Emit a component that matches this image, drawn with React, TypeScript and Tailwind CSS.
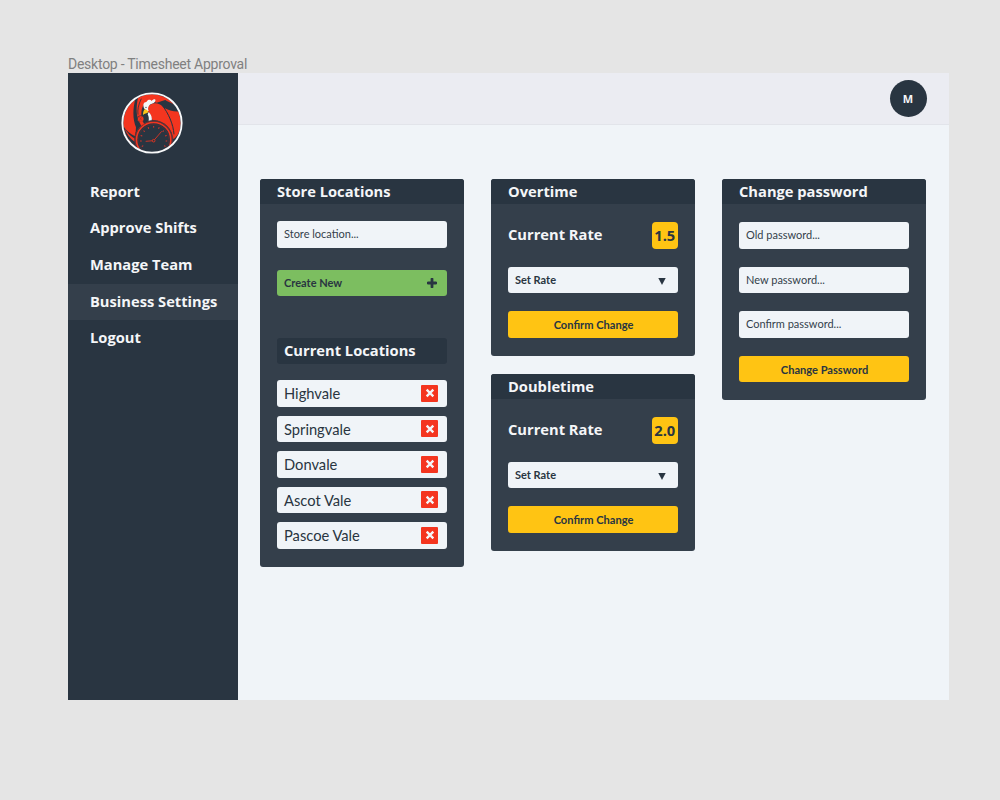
import type { ReactNode } from "react";

const navItems = ["Report", "Approve Shifts", "Manage Team", "Business Settings", "Logout"];
const locations = ["Highvale", "Springvale", "Donvale", "Ascot Vale", "Pascoe Vale"];
const ticks = [-120, -96, -72, -48, -24, 0, 24, 48, 72, 96, 120];

function Logo() {
  return (
    <svg className="h-[62px] w-[62px]" viewBox="27 24 186 186" aria-hidden="true">
      <defs>
        <clipPath id="disc">
          <circle cx="120" cy="117" r="86" />
        </clipPath>
      </defs>
      <circle cx="120" cy="117" r="88" fill="#293541" />
      <g clipPath="url(#disc)">
        <path d="M30 125C34 90 44 67 70 44C61 80 63 108 72 130L68 190C50 174 36 150 30 125Z" fill="#f4351f" />
        <path d="M34 126C42 140 54 150 72 158L68 190C52 174 38 152 34 126Z" fill="#293541" />
        <path d="M38 134C46 147 58 158 70 165L68 173C55 164 44 151 38 134Z" fill="#f4351f" />
        <path d="M78 41C96 30 120 26 147 36L166 46L134 56C120 50 107 55 97 60C88 72 88 84 88 97L78 104C72 88 73 64 78 41Z" fill="#f4351f" />
        <path d="M88 44C79 62 76 78 78 92" fill="none" stroke="#293541" strokeWidth="2.5" />
        <path d="M144 34C170 38 186 52 197 66L163 50Z" fill="#f4351f" />
        <path d="M152 70C170 80 190 84 203 82L207 120C206 140 198 155 184 166C184 127 171 96 152 70Z" fill="#f4351f" />
        <path d="M104 72C117 53 140 54 153 68C171 91 183 127 186 158L179 171C177 135 150 109 122 109L112 91Z" fill="#f4351f" />
        <path d="M149 62C170 88 184 121 186 151" fill="none" stroke="#293541" strokeWidth="3" />
        <path d="M97 74C92 64 94 54 103 54C108 45 117 47 118 51C126 43 132 45 130 51C126 60 116 58 111 65C108 69 107 76 110 80L106 83Z" fill="#f4f6f8" />
        <path d="M106 82C112 84 120 96 118 110L111 111C112 101 107 98 101 92Z" fill="#293541" />
        <path d="M110 84C118 92 121 102 119 110L110 111C111 103 110 97 107 91Z" fill="#f4f6f8" />
        <path d="M98 76C103 76 108 80 109 85C104 88 98 89 93 93C93 85 95 80 98 76Z" fill="#fcc419" />
        <circle cx="102" cy="70" r="2" fill="#293541" />
        <circle cx="86" cy="105" r="10" fill="#f4351f" stroke="#293541" strokeWidth="2" />
        <path d="M82 100l8 9M89 99l-7 11" stroke="#9d2925" strokeWidth="1.5" />
        <circle cx="125" cy="167" r="58" fill="#293541" />
        <path d="M82 114l9-3 6 9-9 6Z" fill="#f4351f" />
        <circle cx="125" cy="167" r="56" fill="none" stroke="#b32d26" strokeWidth="1.5" />
        <circle cx="125" cy="167" r="51.5" fill="none" stroke="#f4351f" strokeWidth="5" />
        <circle cx="125" cy="167" r="46" fill="none" stroke="#8a2b2a" strokeWidth="1" />
        {ticks.map((a) => (
          <path key={a} d="M125 126v5" transform={`rotate(${a} 125 167)`} stroke="#d9342a" strokeWidth="3" />
        ))}
        <path d="M101 172L125 170L149 142" fill="none" stroke="#f4351f" strokeWidth="2.4" />
        <circle cx="125" cy="170" r="4" fill="#293541" stroke="#f4351f" strokeWidth="2.5" />
      </g>
      <circle cx="120" cy="117" r="89" fill="none" stroke="#f8f9fa" strokeWidth="5.5" />
    </svg>
  );
}

function Card({ title, className, children }: { title: string; className: string; children: ReactNode }) {
  return (
    <section className={`w-[204px] overflow-hidden rounded-[3px] bg-[#343f4b] ${className}`}>
      <h2 className="h-[24.5px] bg-[#293541] pl-[17px] text-[14.7px] leading-[24.5px] font-bold text-[#f4f6f8]">{title}</h2>
      <div className="px-[17px]">{children}</div>
    </section>
  );
}

function Field({ placeholder, className }: { placeholder: string; className: string }) {
  return (
    <div className={`h-[26.5px] rounded-[3px] bg-[#f0f4f8] pl-[7px] font-[Lato,sans-serif] text-[11px] leading-[26px] text-[#343f4b] ${className}`}>
      {placeholder}
    </div>
  );
}

function YellowButton({ label, className }: { label: string; className: string }) {
  return (
    <button className={`block h-[26.5px] w-full rounded-[3px] bg-[#ffc413] pl-[1px] text-center font-[Lato,sans-serif] text-[11.1px] leading-[27px] font-bold text-[#293541] ${className}`}>
      {label}
    </button>
  );
}

function RateCard({ title, rate }: { title: string; rate: string }) {
  return (
    <Card title={title} className="h-[176.5px]">
      <div className="mt-[18.5px] flex h-[26.5px] items-start justify-between">
        <span className="text-[14.7px] leading-[25.5px] font-bold text-[#f4f6f8]">Current Rate</span>
        <span className="h-[26.5px] w-[26.5px] rounded-[4px] bg-[#ffc413] text-center text-[14.7px] leading-[27px] font-bold text-[#293541]">{rate}</span>
      </div>
      <div className="mt-[18px] flex h-[26.5px] items-center justify-between rounded-[3px] bg-[#f0f4f8] pr-[12px] pl-[7px]">
        <span className="font-[Lato,sans-serif] text-[11px] leading-[27px] font-bold text-[#293541]">Set Rate</span>
        <svg className="mt-[4px] h-[7px] w-[8px]" viewBox="0 0 8 7" aria-hidden="true">
          <path d="M0.3 0h7.4L4 7Z" fill="#293541" />
        </svg>
      </div>
      <YellowButton label="Confirm Change" className="mt-[18px]" />
    </Card>
  );
}

export default function App() {
  return (
    <div className="h-[800px] w-[1000px] overflow-hidden bg-[#e5e5e5] pt-[55px] pl-[68px] font-['Open_Sans',sans-serif]">
      <p className="h-[18px] font-[Roboto,sans-serif] text-[14px] leading-[18px] tracking-[-0.25px] whitespace-nowrap text-[#808080]">
        Desktop - Timesheet Approval
      </p>
      <div className="flex h-[626.5px] w-[880.5px] bg-[#f0f4f8]">
        <aside className="w-[170px] shrink-0 bg-[#293541]">
          <div className="h-[100.5px] pt-[19px] pl-[53px]">
            <Logo />
          </div>
          <nav>
            {navItems.map((item) => (
              <a
                key={item}
                className={`block h-[36.7px] pl-[22px] text-[14.7px] leading-[35.8px] font-bold text-[#f4f6f8] ${item === "Business Settings" ? "bg-[#343f4b]" : ""}`}
              >
                {item}
              </a>
            ))}
          </nav>
        </aside>
        <div className="flex-1">
          <header className="flex h-[52px] items-center justify-end border-b border-[#e2e4ea] bg-[#ebecf2] pr-[22px]">
            <div className="flex h-[37px] w-[37px] items-center justify-center rounded-full bg-[#293541] text-[11px] leading-none font-bold text-[#f4f6f8]">
              M
            </div>
          </header>
          <main className="flex items-start gap-[27px] pt-[54px] pl-[22px]">
            <Card title="Store Locations" className="h-[388px]">
              <Field placeholder="Store location..." className="mt-[17.5px]" />
              <button className="mt-[22px] flex h-[26.5px] w-full items-center justify-between rounded-[3px] bg-[#7cbe60] pr-[10px] pl-[7px] font-[Lato,sans-serif] text-[11px] leading-[27px] font-bold text-[#293541]">
                <span>Create New</span>
                <svg className="h-[10px] w-[10px]" viewBox="0 0 10 10" aria-hidden="true">
                  <path d="M5 1v8M1 5h8" stroke="#293541" strokeWidth="2.8" strokeLinecap="round" />
                </svg>
              </button>
              <h3 className="mt-[41.5px] h-[26.5px] rounded-[3px] bg-[#293541] pl-[7px] text-[14.7px] leading-[25px] font-bold text-[#f4f6f8]">
                Current Locations
              </h3>
              <ul className="mt-[16px] flex flex-col gap-[9px]">
                {locations.map((name) => (
                  <li key={name} className="flex h-[26.5px] items-start justify-between rounded-[3px] bg-[#f0f4f8] pr-[9px] pl-[7px]">
                    <span className="font-[Lato,sans-serif] text-[14.7px] leading-[26px] text-[#293541]">{name}</span>
                    <span className="mt-[4.5px] flex h-[17px] w-[17px] items-center justify-center rounded-[1px] bg-[#f4351f]">
                      <svg className="h-[10px] w-[10px]" viewBox="0 0 9 9" aria-hidden="true">
                        <path d="M1.5 1.5l6 6M7.5 1.5l-6 6" stroke="#f4f6f8" strokeWidth="2.1" />
                      </svg>
                    </span>
                  </li>
                ))}
              </ul>
            </Card>
            <div className="flex flex-col gap-[18.5px]">
              <RateCard title="Overtime" rate="1.5" />
              <RateCard title="Doubletime" rate="2.0" />
            </div>
            <Card title="Change password" className="h-[221px]">
              <Field placeholder="Old password..." className="mt-[18.5px]" />
              <Field placeholder="New password..." className="mt-[18px]" />
              <Field placeholder="Confirm password..." className="mt-[18px]" />
              <YellowButton label="Change Password" className="mt-[18px]" />
            </Card>
          </main>
        </div>
      </div>
    </div>
  );
}
